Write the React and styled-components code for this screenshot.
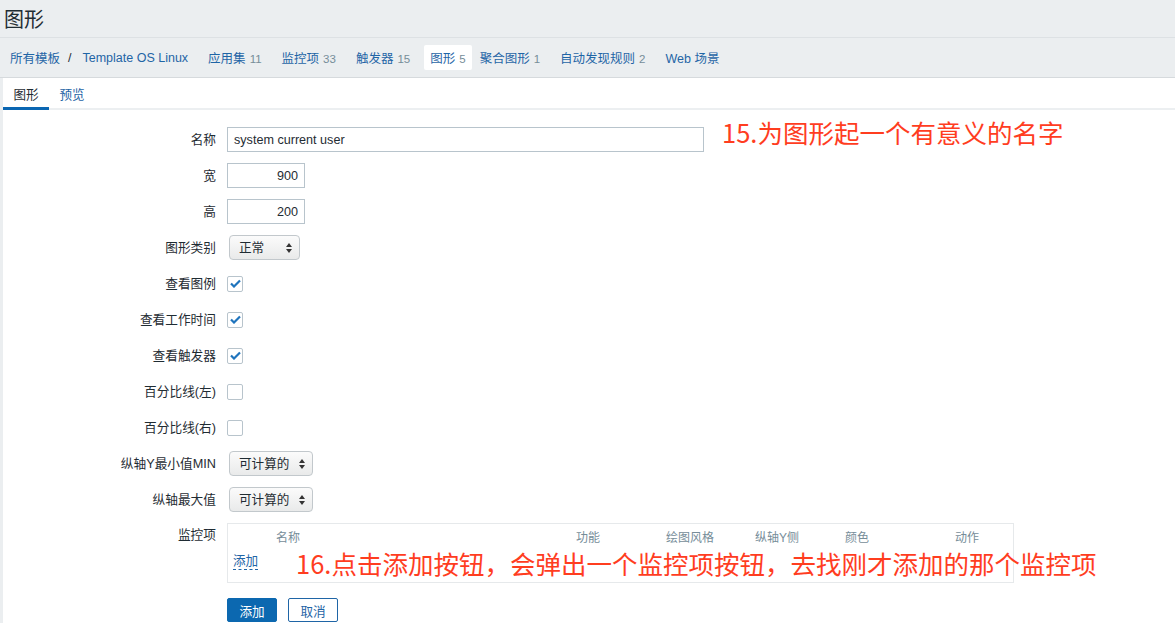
import React from "react";
import styled, { createGlobalStyle } from "styled-components";

const Global = createGlobalStyle`
  html, body { margin: 0; padding: 0; }
  body {
    background: #ebeef0;
    font-family: "Liberation Sans", "Noto Sans CJK SC", sans-serif;
    font-size: 12px;
    color: #1f2c33;
    width: 1175px;
    height: 623px;
    overflow: hidden;
  }
`;

const Header = styled.div`
  height: 38px;
  display: flex;
  align-items: center;
  padding-left: 4px;
  border-bottom: 1px solid #dde1e4;
  box-sizing: border-box;
`;
const Title = styled.h1`
  margin: 0;
  font-size: 20px;
  font-weight: normal;
  color: #1f2c33;
`;
const Nav = styled.div`
  height: 40px;
  display: flex;
  align-items: center;
  padding-left: 4px;
  border-bottom: 1px solid #d6dadd;
  box-sizing: border-box;
  font-size: 12.5px;
`;
const NavItem = styled.a`
  color: #1f65a6;
  text-decoration: none;
  padding: 3px 6px;
  margin-right: ${(p) => p.$gap ?? 8}px;
  border-radius: 2px;
  background: ${(p) => (p.$active ? "#ffffff" : "transparent")};
  white-space: nowrap;
`;
const Count = styled.span`
  color: #768d99;
  font-size: 11.5px;
  margin-left: 4px;
`;
const Sep = styled.span`
  color: #1f2c33;
  margin: 0 5px 0 2px;
`;
const Main = styled.div`
  background: #fff;
  margin-left: 3px;
  height: 545px;
`;
const Tabs = styled.div`
  display: flex;
  height: 32px;
  border-bottom: 2px solid #eceff1;
  box-sizing: border-box;
`;
const Tab = styled.div`
  width: ${(p) => p.$w}px;
  display: flex;
  justify-content: center;
  align-items: center;
  color: ${(p) => (p.$active ? "#1f2c33" : "#1f65a6")};
  border-bottom: 3px solid ${(p) => (p.$active ? "#0a66b2" : "transparent")};
  margin-bottom: -2px;
  font-size: 12.6px;
  box-sizing: border-box;
  padding-top: 1px;
`;
const Form = styled.div`
  display: grid;
  grid-template-columns: 213px 1fr;
  column-gap: 11px;
  row-gap: 11px;
  padding-top: 17px;
  align-items: center;
`;
const Label = styled.div`
  text-align: right;
  color: #1f2c33;
  font-size: 12.7px;
  line-height: 16px;
  white-space: nowrap;
  align-self: ${(p) => (p.$top ? "start" : "center")};
  padding-top: ${(p) => (p.$top ? 4 : 0)}px;
`;
const Field = styled.div`
  display: flex;
  align-items: ${(p) => (p.$tall ? "flex-start" : "center")};
  position: relative;
  height: ${(p) => (p.$tall ? 60 : 25)}px;
`;
const TextInput = styled.div`
  width: ${(p) => p.$w}px;
  height: 25px;
  box-sizing: border-box;
  border: 1px solid #b8c4cc;
  padding: 0 6px;
  display: flex;
  align-items: center;
  justify-content: ${(p) => (p.$right ? "flex-end" : "flex-start")};
  color: #1f2c33;
  font-size: 12.6px;
  line-height: 16px;
`;
const Select = styled.div`
  margin-left: 2px;
  width: ${(p) => p.$w}px;
  height: 25px;
  box-sizing: border-box;
  border: 1px solid #c2c8cc;
  border-radius: 4px;
  background: linear-gradient(#fbfbfb, #e9eaea);
  display: flex;
  align-items: center;
  justify-content: space-between;
  padding: 0 7px 0 9px;
  color: #1f2c33;
  font-size: 12.6px;
  line-height: 16px;
`;
const Arrows = styled.svg`
  width: 6px;
  height: 10px;
`;
const Check = styled.div`
  width: 16px;
  height: 16px;
  box-sizing: border-box;
  border: 1px solid #b8c4cc;
  border-radius: 2px;
  display: flex;
  align-items: center;
  justify-content: center;
`;
const Note = styled.span`
  position: absolute;
  left: ${(p) => p.$left}px;
  top: ${(p) => p.$top}px;
  color: #ff3d1f;
  font-size: 25.5px;
  font-family: "Noto Sans CJK SC", sans-serif;
  white-space: nowrap;
  line-height: 1;
`;
const ItemsBox = styled.div`
  width: 787px;
  height: 60px;
  box-sizing: border-box;
  border: 1px solid #e6e9eb;
  position: relative;
`;
const ItemsHead = styled.div`
  display: grid;
  grid-template-columns: 48px 300px 90px 89px 90px 110px 60px;
  height: 28px;
  align-items: center;
  color: #768d99;
  font-size: 12px;
  line-height: 14px;
`;
const AddLink = styled.a`
  position: absolute;
  left: 5px;
  top: 30px;
  color: #1f65a6;
  border-bottom: 1px dashed #1f65a6;
  line-height: 15px;
  font-size: 12.6px;
`;
const Buttons = styled.div`
  display: flex;
  gap: 11px;
  margin-top: 4px;
`;
const Button = styled.div`
  height: 24px;
  width: 50px;
  box-sizing: border-box;
  border-radius: 2px;
  display: flex;
  align-items: center;
  justify-content: center;
  font-size: 12.6px;
  background: ${(p) => (p.$primary ? "#0c68b0" : "#fff")};
  color: ${(p) => (p.$primary ? "#fff" : "#1f65a6")};
  border: 1px solid ${(p) => (p.$primary ? "#0c68b0" : "#1f65a6")};
`;

const ArrowIcon = () => (
  <Arrows viewBox="0 0 6 10">
    <path d="M3 0 L6 4 L0 4 Z M0 6 L6 6 L3 10 Z" fill="#333" />
  </Arrows>
);

const CheckBox = ({ on }) => (
  <Check>
    {on && (
      <svg width="11" height="9" viewBox="0 0 11 9">
        <path d="M1 4.5 L4 7.5 L10 1.5" stroke="#1f74bd" strokeWidth="2.2" fill="none" />
      </svg>
    )}
  </Check>
);

const navItems = [
  { t: "应用集", c: 11 },
  { t: "监控项", c: 33 },
  { t: "触发器", c: 15 },
  { t: "图形", c: 5, active: true },
  { t: "聚合图形", c: 1 },
  { t: "自动发现规则", c: 2 },
  { t: "Web 场景" },
];

export default function App() {
  return (
    <>
      <Global />
      <Header>
        <Title>图形</Title>
      </Header>
      <Nav>
        <NavItem $gap={0}>所有模板</NavItem>
        <Sep>/</Sep>
        <NavItem $gap={8}>Template OS Linux</NavItem>
        {navItems.map((n) => (
          <NavItem key={n.t} $active={n.active} $gap={n.active ? 2 : 8}>
            {n.t}
            {n.c !== undefined && <Count>{n.c}</Count>}
          </NavItem>
        ))}
      </Nav>
      <Main>
        <Tabs>
          <Tab $w={46} $active>图形</Tab>
          <Tab $w={46}>预览</Tab>
        </Tabs>
        <Form>
          <Label>名称</Label>
          <Field>
            <TextInput $w={477}>system current user</TextInput>
            <Note $left={495} $top={-8}>15.为图形起一个有意义的名字</Note>
          </Field>
          <Label>宽</Label>
          <Field>
            <TextInput $w={78} $right>900</TextInput>
          </Field>
          <Label>高</Label>
          <Field>
            <TextInput $w={78} $right>200</TextInput>
          </Field>
          <Label>图形类别</Label>
          <Field>
            <Select $w={71}>正常<ArrowIcon /></Select>
          </Field>
          <Label>查看图例</Label>
          <Field><CheckBox on /></Field>
          <Label>查看工作时间</Label>
          <Field><CheckBox on /></Field>
          <Label>查看触发器</Label>
          <Field><CheckBox on /></Field>
          <Label>百分比线(左)</Label>
          <Field><CheckBox /></Field>
          <Label>百分比线(右)</Label>
          <Field><CheckBox /></Field>
          <Label>纵轴Y最小值MIN</Label>
          <Field>
            <Select $w={84}>可计算的<ArrowIcon /></Select>
          </Field>
          <Label>纵轴最大值</Label>
          <Field>
            <Select $w={84}>可计算的<ArrowIcon /></Select>
          </Field>
          <Label $top>监控项</Label>
          <Field $tall>
            <ItemsBox>
              <ItemsHead>
                <span />
                <span>名称</span>
                <span>功能</span>
                <span>绘图风格</span>
                <span>纵轴Y侧</span>
                <span>颜色</span>
                <span>动作</span>
              </ItemsHead>
              <AddLink>添加</AddLink>
              <Note $left={68} $top={26}>16.点击添加按钮，会弹出一个监控项按钮，去找刚才添加的那个监控项</Note>
            </ItemsBox>
          </Field>
          <span />
          <Buttons>
            <Button $primary>添加</Button>
            <Button>取消</Button>
          </Buttons>
        </Form>
      </Main>
    </>
  );
}
